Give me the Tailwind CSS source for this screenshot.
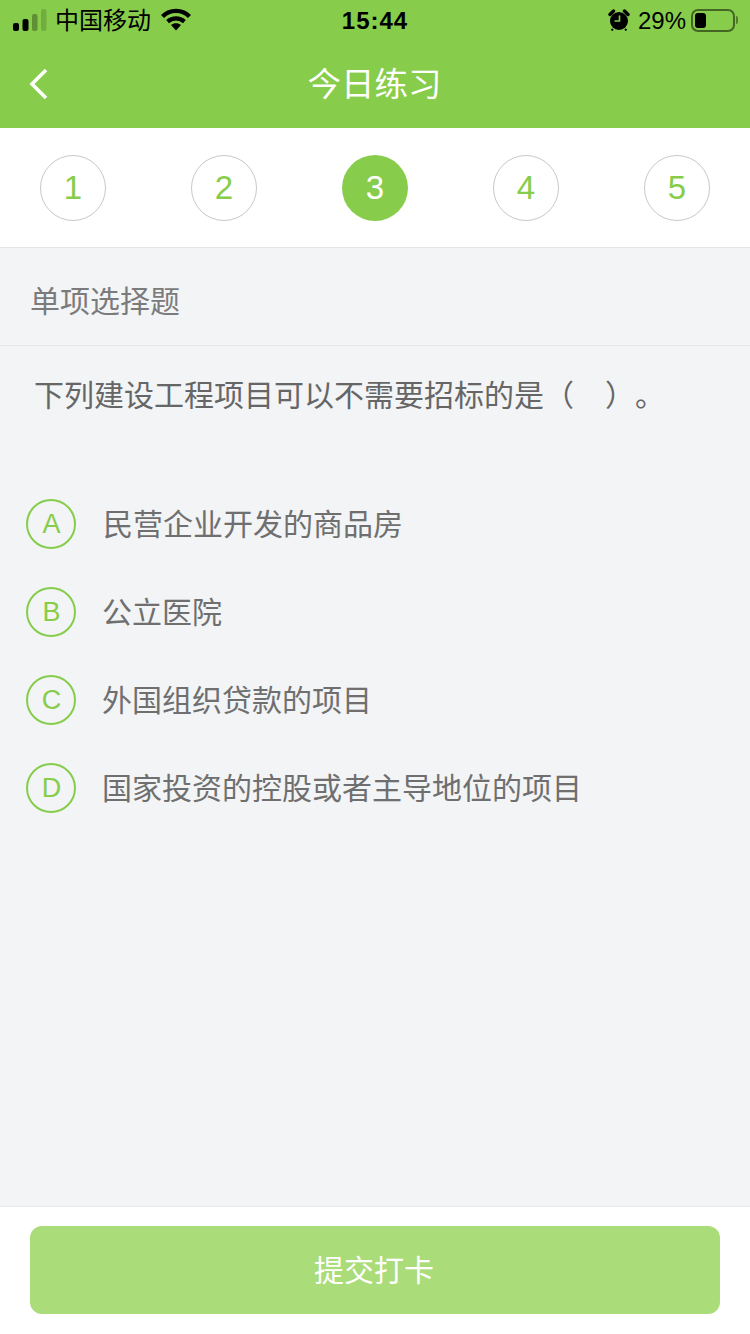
<!DOCTYPE html>
<html lang="zh-CN">
<head>
<meta charset="utf-8">
<script src="https://cdn.jsdelivr.net/npm/@tailwindcss/browser@4"></script>
<title>今日练习</title>
</head>
<body class="m-0 font-['Liberation_Sans','Noto_Sans_CJK_SC',sans-serif]">
<div class="w-[750px] h-[1334px] flex flex-col bg-[#f2f4f6] overflow-hidden">
  <header class="h-[128px] shrink-0 bg-[#87cd4b] flex flex-col">
    <div class="h-[40px] relative flex items-center justify-between pl-[13px] pr-[12px] pt-[2px] text-black">
      <div class="flex items-center">
        <svg width="34" height="22" viewBox="0 0 34 22" class="mr-[8px] -mt-[2px]">
          <rect x="0" y="14" width="6" height="8" rx="2" fill="#000"/>
          <rect x="9.5" y="10" width="6" height="12" rx="2" fill="#000"/>
          <rect x="19" y="5" width="5.5" height="17" rx="2" fill="#000" fill-opacity=".3"/>
          <rect x="28" y="0" width="5.5" height="22" rx="2" fill="#000" fill-opacity=".15"/>
        </svg>
        <span class="text-[24px] leading-[40px]">中国移动</span>
        <svg width="30" height="23" viewBox="0 0 30 23" class="ml-[10px] -mt-[3px]">
          <path d="M1.5 8.5C9 1 21 1 28.5 8.5" fill="none" stroke="#000" stroke-width="4.4"/>
          <path d="M6.6 13.6C11.5 9.4 18.5 9.4 23.4 13.6" fill="none" stroke="#000" stroke-width="4.2"/>
          <path d="M10 17 C13 14.8 17 14.8 20 17 L15 22.5Z" fill="#000"/>
        </svg>
      </div>
      <span class="absolute left-0 right-0 text-center text-[24px] font-bold leading-[40px] tracking-[1px]">15:44</span>
      <div class="flex items-center">
        <svg width="22" height="22" viewBox="0 0 22 22" class="mr-[8px] -mt-[2px]">
          <circle cx="11" cy="12" r="9" fill="#000"/>
          <path d="M11.5 6.5v5.5H6.5" fill="none" stroke="#87cd4b" stroke-width="1.6"/>
          <path d="M2 5.5 5.5 2M20 5.5 16.500 2" stroke="#000" stroke-width="3.4" stroke-linecap="round"/>
          <path d="M5 20 3.500 21.500M17 20 18.500 21.500" stroke="#000" stroke-width="1.800"/>
        </svg>
        <span class="text-[24px] leading-[40px]">29%</span>
        <div class="ml-[5px] w-[44px] h-[23px] -mt-[2px] rounded-[7px] border-2 border-black/50 p-[2px]">
          <div class="w-[11px] h-full rounded-[3px] bg-black"></div>
        </div>
        <div class="ml-[1px] w-[2px] h-[8px] -mt-[2px] rounded-r-full bg-black/40"></div>
      </div>
    </div>
    <div class="h-[88px] relative flex items-center justify-center pt-[2px]">
      <svg width="20" height="32" viewBox="0 0 20 32" class="absolute left-[29px] top-[28px]">
        <path d="M17 2 3 16l14 14" fill="none" stroke="#fff" stroke-width="3.600"/>
      </svg>
      <h1 class="text-[33.5px] font-normal text-white leading-none -ml-[1px]">今日练习</h1>
    </div>
  </header>

  <nav class="h-[120px] shrink-0 bg-white border-b border-[#e5e5e5] px-[40px] pt-[1px] flex items-center justify-between text-[33px] text-[#87cd4b]">
    <div class="w-[66px] h-[66px] rounded-full border border-[#c8c8c8] flex items-center justify-center">1</div>
    <div class="w-[66px] h-[66px] rounded-full border border-[#c8c8c8] flex items-center justify-center">2</div>
    <div class="w-[66px] h-[66px] rounded-full bg-[#87cd4b] text-white flex items-center justify-center">3</div>
    <div class="w-[66px] h-[66px] rounded-full border border-[#c8c8c8] flex items-center justify-center">4</div>
    <div class="w-[66px] h-[66px] rounded-full border border-[#c8c8c8] flex items-center justify-center">5</div>
  </nav>

  <main class="flex-1 min-h-0 flex flex-col">
    <div class="h-[98px] shrink-0 border-b border-[#e6e7e9] pl-[30px] pt-[35px] text-[30px] leading-[38px] text-[#7b7b7b]">单项选择题</div>
    <p class="pl-[34px] mt-[30px] text-[30px] leading-[40px] text-[#666666] [text-spacing-trim:space-all]">下列建设工程项目可以不需要招标的是（<span class="inline-block w-[31px]"></span>）。</p>
    <ul class="mt-[83px] pl-[26px] flex flex-col gap-[38px]">
      <li class="h-[50px] flex items-center">
        <span class="w-[50px] h-[50px] shrink-0 rounded-full border-2 border-[#87cd4b] flex items-center justify-center pl-[1px] text-[27px] text-[#87cd4b]">A</span>
        <span class="ml-[27px] text-[30px] text-[#6f6f6f]">民营企业开发的商品房</span>
      </li>
      <li class="h-[50px] flex items-center">
        <span class="w-[50px] h-[50px] shrink-0 rounded-full border-2 border-[#87cd4b] flex items-center justify-center pl-[1px] text-[27px] text-[#87cd4b]">B</span>
        <span class="ml-[26px] text-[30px] text-[#6f6f6f]">公立医院</span>
      </li>
      <li class="h-[50px] flex items-center">
        <span class="w-[50px] h-[50px] shrink-0 rounded-full border-2 border-[#87cd4b] flex items-center justify-center pl-[1px] text-[27px] text-[#87cd4b]">C</span>
        <span class="ml-[26px] text-[30px] text-[#6f6f6f]">外国组织贷款的项目</span>
      </li>
      <li class="h-[50px] flex items-center">
        <span class="w-[50px] h-[50px] shrink-0 rounded-full border-2 border-[#87cd4b] flex items-center justify-center pl-[1px] text-[27px] text-[#87cd4b]">D</span>
        <span class="ml-[26px] text-[30px] text-[#6f6f6f]">国家投资的控股或者主导地位的项目</span>
      </li>
    </ul>
  </main>

  <footer class="h-[128px] shrink-0 bg-white border-t border-[#e8e9eb] px-[30px] pt-[19px]">
    <button class="w-[690px] h-[88px] rounded-[12px] bg-[#aadc79] text-white text-[30px] pr-[2px] flex items-center justify-center">提交打卡</button>
  </footer>
</div>
</body>
</html>
